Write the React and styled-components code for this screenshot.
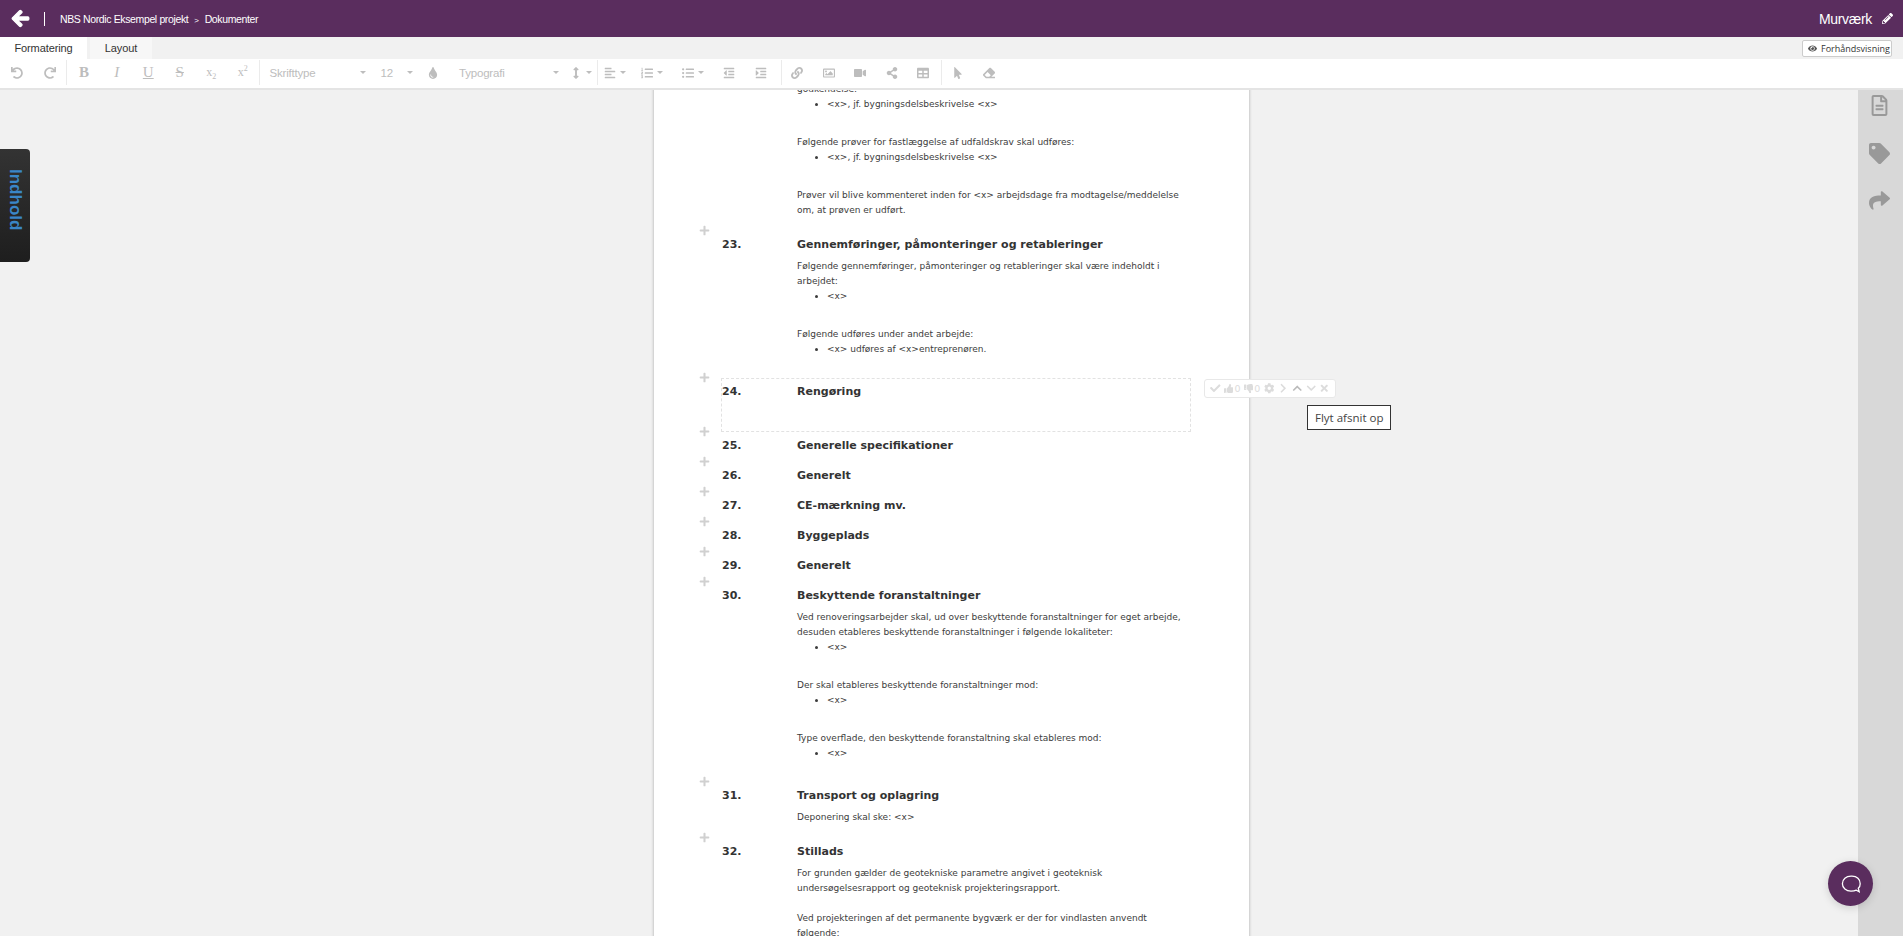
import styled, { createGlobalStyle } from 'styled-components'
import {
  FaArrowLeft, FaPencilAlt, FaEye, FaUndo, FaRedo, FaTint, FaArrowsAltV, FaAlignLeft, FaListOl, FaListUl,
  FaOutdent, FaIndent, FaLink, FaRegImage, FaVideo, FaShareAlt, FaTable, FaMousePointer, FaEraser,
  FaPlus, FaRegFileAlt, FaTag, FaShare, FaCheck, FaThumbsUp, FaThumbsDown, FaCog, FaChevronRight,
  FaChevronUp, FaChevronDown, FaTimes,
} from 'react-icons/fa'

const sections = [
  { no: '23.', title: 'Gennemføringer, påmonteringer og retableringer', body: [
    { text: 'Følgende gennemføringer, påmonteringer og retableringer skal være indeholdt i arbejdet:', list: ['<x>'] },
    { text: 'Følgende udføres under andet arbejde:', list: ['<x> udføres af <x>entreprenøren.'] },
  ] },
  { no: '24.', title: 'Rengøring', active: true },
  { no: '25.', title: 'Generelle specifikationer' },
  { no: '26.', title: 'Generelt' },
  { no: '27.', title: 'CE-mærkning mv.' },
  { no: '28.', title: 'Byggeplads' },
  { no: '29.', title: 'Generelt' },
  { no: '30.', title: 'Beskyttende foranstaltninger', body: [
    { text: 'Ved renoveringsarbejder skal, ud over beskyttende foranstaltninger for eget arbejde, desuden etableres beskyttende foranstaltninger i følgende lokaliteter:', list: ['<x>'] },
    { text: 'Der skal etableres beskyttende foranstaltninger mod:', list: ['<x>'] },
    { text: 'Type overflade, den beskyttende foranstaltning skal etableres mod:', list: ['<x>'] },
  ] },
  { no: '31.', title: 'Transport og oplagring', body: [{ text: 'Deponering skal ske: <x>' }] },
  { no: '32.', title: 'Stillads', body: [
    { text: 'For grunden gælder de geotekniske parametre angivet i geoteknisk undersøgelsesrapport og geoteknisk projekteringsrapport.' },
    { text: 'Ved projekteringen af det permanente bygværk er der for vindlasten anvendt følgende:' },
  ] },
]

const Block = ({ text, list }) => (
  <BlockWrap $hasList={!!list}>
    <Para>{text}</Para>
    {list && <List>{list.map((l, i) => <li key={i}>{l}</li>)}</List>}
  </BlockWrap>
)

const Section = ({ no, title, body, active }) => (
  <SectionWrap $active={active} $empty={!body}>
    <AddBtn><FaPlus /></AddBtn>
    <SectionHead>
      <Num>{no}</Num>
      <Title>{title}</Title>
    </SectionHead>
    {body && (
      <SectionBody>
        {body.map((b, i) => <Block key={i} {...b} />)}
      </SectionBody>
    )}
    {active && (
      <>
        <SectionTools>
          <FaCheck />
          <Count><FaThumbsUp />0</Count>
          <Count><FaThumbsDown />0</Count>
          <FaCog />
          <FaChevronRight />
          <DarkTool><FaChevronUp /></DarkTool>
          <FaChevronDown />
          <FaTimes />
        </SectionTools>
        <Tooltip>Flyt afsnit op</Tooltip>
      </>
    )}
  </SectionWrap>
)

const App = () => {
  return (
    <Root>
      <GlobalStyle />
      <Header>
        <BackBtn><FaArrowLeft /></BackBtn>
        <HeaderSep />
        <Crumbs>NBS Nordic Eksempel projekt<CrumbArrow>&gt;</CrumbArrow>Dokumenter</Crumbs>
        <DocName>Murværk</DocName>
        <EditIcon><FaPencilAlt /></EditIcon>
      </Header>
      <TabBar>
        <Tab $active>Formatering</Tab>
        <Tab $w={62}>Layout</Tab>
        <PreviewBtn><FaEye />Forhåndsvisning</PreviewBtn>
      </TabBar>
      <Toolbar>
        <Tool $w={33}><FaUndo /></Tool>
        <Tool $w={33}><FaRedo /></Tool>
        <ToolSep />
        <Tool $w={34} $letter="bold">B</Tool>
        <Tool $letter="italic">I</Tool>
        <Tool $letter="underline">U</Tool>
        <Tool $letter="strike">S</Tool>
        <Tool $small><span>x<sub>2</sub></span></Tool>
        <Tool $small><span>x<sup>2</sup></span></Tool>
        <ToolSep />
        <Select $w={111}>Skrifttype<Caret /></Select>
        <Select $w={47}>12<Caret /></Select>
        <Tool><FaTint /></Tool>
        <Select $w={114.5}>Typografi<Caret /></Select>
        <DropTool $w={33}><FaArrowsAltV /><Caret /></DropTool>
        <ToolSep />
        <DropTool $w={33}><FaAlignLeft /><Caret /></DropTool>
        <DropTool $w={40}><FaListOl /><Caret /></DropTool>
        <DropTool $w={43}><FaListUl /><Caret /></DropTool>
        <Tool><FaOutdent /></Tool>
        <Tool><FaIndent /></Tool>
        <ToolSep $before={4} />
        <Tool><FaLink /></Tool>
        <Tool><FaRegImage /></Tool>
        <Tool><FaVideo /></Tool>
        <Tool><FaShareAlt /></Tool>
        <Tool><FaTable /></Tool>
        <ToolSep $before={2} />
        <Tool><FaMousePointer /></Tool>
        <Tool><FaEraser /></Tool>
      </Toolbar>
      <Main>
        <Canvas>
          <Page>
            <Scrolled>
              <Para>godkendelse:</Para>
              <BlockWrap $hasList>
                <List><li>&lt;x&gt;, jf. bygningsdelsbeskrivelse &lt;x&gt;</li></List>
              </BlockWrap>
              <Block text="Følgende prøver for fastlæggelse af udfaldskrav skal udføres:" list={['<x>, jf. bygningsdelsbeskrivelse <x>']} />
              <Para>Prøver vil blive kommenteret inden for &lt;x&gt; arbejdsdage fra modtagelse/meddelelse om, at prøven er udført.</Para>
            </Scrolled>
            {sections.map((s) => <Section key={s.no} {...s} />)}
          </Page>
        </Canvas>
        <Rail>
          <RailIcon><FaRegFileAlt /></RailIcon>
          <RailIcon><FaTag /></RailIcon>
          <RailIcon><FaShare /></RailIcon>
        </Rail>
      </Main>
      <ContentTab>Indhold</ContentTab>
      <ChatBtn>
        <svg width="20" height="20" viewBox="0 0 20 20" fill="none" stroke="#fff" strokeWidth="1.3">
          <path d="M10 2.2c-4.9 0-8.6 3-8.6 7.5 0 4.4 3.7 7.4 8.6 7.4 2 0 4-.3 5.3-.9l2.9 1.6-.9-3.6c1.4-1.2 1.9-2.8 1.9-4.5 0-4.5-3.3-7.5-8.2-7.5z" />
        </svg>
      </ChatBtn>
    </Root>
  )
}

export default App

const GlobalStyle = createGlobalStyle`
  html, body {
    margin: 0;
    padding: 0;
    height: 100%;
    overflow: hidden;
  }
  * {
    box-sizing: border-box;
  }
`

const Root = styled.div`
  position: relative;
  display: flex;
  flex-direction: column;
  height: 936px;
  overflow: hidden;
  background: #f1f1f1;
  font-family: "Liberation Sans", Arial, sans-serif;
`

const Header = styled.div`
  flex: none;
  display: flex;
  align-items: center;
  height: 37px;
  background: #5a2d5e;
  color: #fff;
`

const BackBtn = styled.div`
  display: flex;
  margin-left: 11px;
  width: 33px;
  font-size: 19px;

  svg path {
    stroke: #fff;
    stroke-width: 35;
  }
`

const HeaderSep = styled.div`
  width: 1px;
  height: 14px;
  background: #fff;
`

const Crumbs = styled.div`
  margin-left: 15px;
  font-size: 10.5px;
  letter-spacing: -0.37px;
`

const CrumbArrow = styled.span`
  margin: 0 6px;
  font-size: 8px;
`

const DocName = styled.div`
  margin-left: auto;
  font-size: 14px;
  letter-spacing: -0.3px;
`

const EditIcon = styled.div`
  display: flex;
  margin: 0 10px 0 10px;
  font-size: 11px;
`

const TabBar = styled.div`
  flex: none;
  display: flex;
  height: 22px;
  background: #f1f1f1;
`

const Tab = styled.div`
  width: ${({ $w }) => ($w ? `${$w}px` : '87px')};
  margin-left: ${({ $w }) => ($w ? '3px' : '0')};
  text-align: center;
  font-size: 11px;
  letter-spacing: -0.1px;
  line-height: 22px;
  color: #333;
  background: ${({ $active }) => ($active ? '#fff' : '#f7f7f7')};
`

const PreviewBtn = styled.div`
  display: flex;
  align-items: center;
  gap: 4px;
  margin: 3px 11px 0 auto;
  padding-left: 5px;
  width: 90px;
  height: 17px;
  background: #fff;
  border: 1px solid #ccc;
  border-radius: 2px;
  font-family: "Open Sans", sans-serif;
  font-size: 9px;
  color: #333;
  white-space: nowrap;

  svg {
    flex: none;
    font-size: 9px;
    color: #555;
  }
`

const Toolbar = styled.div`
  position: relative;
  z-index: 1;
  flex: none;
  display: flex;
  align-items: center;
  height: 31px;
  padding-bottom: 2px;
  background: #fff;
  border-bottom: 2px solid #e4e4e4;
  color: #bdbdbd;
  font-size: 12px;
`

const Tool = styled.div`
  flex: none;
  display: flex;
  align-items: center;
  justify-content: center;
  width: ${({ $w }) => ($w ? `${$w}px` : '31.5px')};
  height: 25px;
  font-family: "Liberation Serif", serif;
  font-size: ${({ $letter }) => ($letter ? '15px' : '12px')};
  font-weight: ${({ $letter }) => ($letter === 'bold' ? 700 : 400)};
  font-style: ${({ $letter }) => ($letter === 'italic' ? 'italic' : 'normal')};
  text-decoration: ${({ $letter }) =>
    $letter === 'underline' ? 'underline' : $letter === 'strike' ? 'line-through' : 'none'};

  sub, sup {
    font-size: 8px;
    line-height: 0;
  }
`

const DropTool = styled(Tool)`
  gap: 4px;
  padding-left: 2px;
`

const ToolSep = styled.div`
  flex: none;
  width: 1px;
  height: 25px;
  margin-left: ${({ $before }) => ($before ? `${$before}px` : '0')};
  background: #ebebeb;
`

const Select = styled.div`
  flex: none;
  display: flex;
  align-items: center;
  justify-content: space-between;
  width: ${({ $w }) => `${$w}px`};
  height: 25px;
  padding: 0 5px 0 10px;
  font-size: 11.5px;
  letter-spacing: -0.2px;
`

const Caret = styled.span`
  flex: none;
  width: 0;
  height: 0;
  border-left: 3px solid transparent;
  border-right: 3px solid transparent;
  border-top: 3px solid #bdbdbd;
`

const Main = styled.div`
  flex: 1;
  display: flex;
  min-height: 0;
`

const Canvas = styled.div`
  flex: 1;
  min-width: 0;
  overflow: hidden;
  padding-left: 654px;
`

const Page = styled.div`
  width: 595px;
  min-height: 100%;
  padding: 0 0 0 67px;
  background: #fff;
  box-shadow: 0 0 3px rgba(0, 0, 0, 0.3);
  color: #3c3c3c;
  font-family: "DejaVu Sans", Verdana, sans-serif;
  font-size: 9px;
  line-height: 15px;
`

const Scrolled = styled.div`
  margin-top: -8px;
  margin-bottom: 13px;
  padding-left: 76px;
  width: 470px;
`

const SectionWrap = styled.div`
  position: relative;
  width: 470px;
  padding-bottom: ${({ $empty }) => ($empty ? '3px' : '2px')};
  min-height: ${({ $active }) => ($active ? '54px' : '30px')};
  border: 1px dashed ${({ $active }) => ($active ? '#e2e2e2' : 'transparent')};
`

const AddBtn = styled.div`
  position: absolute;
  left: -23px;
  top: -7px;
  display: flex;
  font-size: 11px;
  color: #d0d0d0;
`

const SectionHead = styled.div`
  display: flex;
  height: 25px;
  align-items: center;
`

const Num = styled.div`
  flex: none;
  width: 75px;
  margin-top: -1px;
  font-size: 11px;
  font-weight: 700;
  color: #333;
`

const Title = styled.div`
  font-size: 11px;
  font-weight: 700;
  color: #333;
`

const SectionBody = styled.div`
  padding: 2px 0 10px 75px;
`

const BlockWrap = styled.div`
  margin-bottom: ${({ $hasList }) => ($hasList ? '23px' : '15px')};

  &:last-child {
    margin-bottom: ${({ $hasList }) => ($hasList ? '8px' : '0')};
  }
`

const Para = styled.div``

const List = styled.ul`
  margin: 0;
  padding: 0 0 0 30px;
`

const SectionTools = styled.div`
  position: absolute;
  left: 482px;
  top: 0;
  display: flex;
  align-items: center;
  justify-content: space-between;
  width: 132px;
  height: 19px;
  padding: 0 5px;
  background: #fff;
  border: 1px solid #e8e8e8;
  border-radius: 3px;
  color: #dcdcdc;
  font-size: 10.5px;
`

const Count = styled.span`
  display: inline-flex;
  align-items: center;
  gap: 1px;
  font-size: 9.5px;
`

const DarkTool = styled.span`
  display: flex;
  color: #bbb;
`

const Tooltip = styled.div`
  position: absolute;
  left: 585px;
  top: 26px;
  padding: 0 7px;
  height: 25px;
  line-height: 23px;
  background: #fff;
  border: 1px solid #333;
  font-family: "Open Sans", sans-serif;
  font-size: 11.5px;
  color: #444;
  white-space: nowrap;
`

const Rail = styled.div`
  flex: none;
  display: flex;
  flex-direction: column;
  align-items: center;
  gap: 26.5px;
  width: 45px;
  padding: 5px 2px 0 0;
  background: #d8d8d8;
  color: #999;
`

const RailIcon = styled.div`
  display: flex;
  font-size: 21px;
`

const ContentTab = styled.div`
  position: absolute;
  left: 0;
  top: 149px;
  display: flex;
  align-items: center;
  justify-content: center;
  width: 30px;
  height: 113px;
  padding: 0 0 11px 0;
  background: linear-gradient(#333, #1e1e1e);
  border-radius: 0 4px 4px 0;
  writing-mode: vertical-rl;
  font-family: "Liberation Sans", sans-serif;
  font-size: 17px;
  font-weight: 700;
  color: #3a87c8;
`

const ChatBtn = styled.div`
  position: absolute;
  left: 1828px;
  top: 861px;
  display: flex;
  align-items: center;
  justify-content: center;
  width: 45px;
  height: 45px;
  border-radius: 50%;
  background: #5a2d5e;
  box-shadow: 0 2px 8px rgba(0, 0, 0, 0.15);
`
